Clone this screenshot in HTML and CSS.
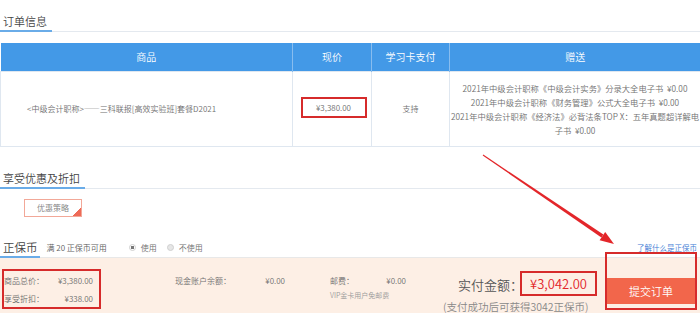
FILE: index.html
```html
<!DOCTYPE html>
<html lang="zh-CN">
<head>
<meta charset="utf-8">
<title>订单信息</title>
<link rel="stylesheet" href="styles.css">
</head>
<body>
<div class="page">
  <div class="title"><span class="tab">订单信息</span></div>
  <table class="order">
    <thead>
      <tr>
        <th class="c1">商品</th>
        <th class="c2">现价</th>
        <th class="c3">学习卡支付</th>
        <th class="c4">赠送</th>
      </tr>
    </thead>
    <tbody>
      <tr>
        <td class="name">&lt;中级会计职称&gt;——三科联报[高效实验班]套餐D2021</td>
        <td><span class="mark price">¥3,380.00</span></td>
        <td>支持</td>
        <td class="gift">
          <div>2021年中级会计职称《中级会计实务》分录大全电子书&nbsp; ¥0.00</div>
          <div>2021年中级会计职称《财务管理》公式大全电子书&nbsp; ¥0.00</div>
          <div>2021年中级会计职称《经济法》必背法条TOP X：五年真题超详解电</div>
          <div>子书&nbsp; ¥0.00</div>
        </td>
      </tr>
    </tbody>
  </table>

  <div class="title title2"><span class="tab">享受优惠及折扣</span></div>
  <div class="coupon">优惠策略</div>

  <div class="coin">
    <span class="tab tab-coin">正保币</span>
    <span class="rule">满 20 正保币可用</span>
    <span class="radios">
      <span class="radio on"></span><span class="radio-label">使用</span>
      <span class="radio"></span><span class="radio-label">不使用</span>
    </span>
    <span class="learn">了解什么是正保币</span>
  </div>

  <div class="bar">
    <div class="mark sum">
      <div class="sum-row"><span>商品总价：</span><span>¥3,380.00</span></div>
      <div class="sum-row"><span>享受折扣：</span><span>¥338.00</span></div>
    </div>
    <div class="cash"><span>现金账户余额：</span><span>¥0.00</span></div>
    <div class="post">
      <div class="post-row"><span>邮费：</span><span>¥0.00</span></div>
      <div class="vip">VIP金卡用户免邮费</div>
    </div>
    <div class="pay">
      <div class="pay-row">
        <span class="pay-label">实付金额：</span>
        <span class="mark pay-total">¥3,042.00</span>
      </div>
      <div class="pay-note">(支付成功后可获得3042正保币)</div>
    </div>
    <div class="submit">
      <div class="submit-btn">提交订单</div>
      <div class="submit-mark"></div>
    </div>
  </div>
</div>
<svg class="arrow" width="700" height="313" viewBox="0 0 700 313" aria-hidden="true">
  <polygon points="482.7,155.4 483.3,154.6 603.4,234.6 601.4,237.6" fill="#e3262a"/>
  <polygon points="614,244 599.6,240.2 605.2,232.0" fill="#e3262a"/>
</svg>
</body>
</html>
```
FILE: styles.css
```css
* { box-sizing: border-box; }
html, body { margin: 0; padding: 0; }
body {
  font-family: "Noto Sans CJK SC", "Noto Sans", sans-serif;
  font-weight: 350;
  color: #707070;
  background: #fff;
  width: 700px;
  height: 313px;
  overflow: hidden;
  position: relative;
}
.page { padding-top: 12px; }

.title {
  display: flex;
  border-bottom: 1px solid #e4e9ef;
}
.title2 { margin-top: 22px; }
.tab {
  font-size: 11px;
  line-height: 18px;
  color: #444;
  font-weight: 350;
  padding: 0 5px 0 3px;
  border-bottom: 2px solid #6aace8;
  margin-bottom: -1px;
}

.order {
  margin-top: 11px;
  width: 700px;
  border-collapse: collapse;
  table-layout: fixed;
}
.c1 { width: 292px; }
.c2 { width: 79px; }
.c3 { width: 78px; }
.c4 { width: 251px; }
.order th {
  background: #4399e7;
  color: #fff;
  font-weight: 350;
  font-size: 10px;
  height: 28px;
  padding: 0;
  border-left: 1px solid #88bdef;
}
.order th:first-child { border-left: 0; }
.order td {
  border: 1px solid #dfe7f0;
  height: 75px;
  text-align: center;
  vertical-align: middle;
  font-size: 8px;
  padding: 0;
  color: #707070;
}
.order td.name { text-align: left; padding-left: 26px; }
.order td.gift { font-size: 8.3px; }
.gift div { line-height: 14px; white-space: nowrap; }

.mark { border: 2px solid #d62b2b; }
.price {
  display: inline-flex;
  align-items: center;
  justify-content: center;
  width: 66px;
  height: 21px;
  margin-left: 3px;
  margin-top: -3px;
}

.coupon {
  display: flex;
  align-items: center;
  justify-content: center;
  margin: 10px 0 0 24px;
  width: 58px;
  height: 18px;
  border: 1px solid #f2a898;
  font-size: 8px;
  color: #808080;
  background:
    linear-gradient(135deg, transparent 50%, #ee6a57 50%) right bottom / 8px 8px no-repeat;
}

.coin {
  display: flex;
  align-items: center;
  margin-top: 21px;
  border-bottom: 1px solid #e8e8e8;
}
.tab-coin { padding-right: 2px; color: #444; font-size: 11.5px; }
.rule { margin-left: 7px; font-size: 8px; color: #606060; }
.radios {
  display: flex;
  align-items: center;
  margin-left: 22px;
  font-size: 8px;
  color: #707070;
}
.radio {
  width: 7px;
  height: 7px;
  border-radius: 50%;
  border: 1px solid #d0d0d0;
  background: #e6e6e6;
  margin-right: 5px;
}
.radio.on { background: radial-gradient(circle, #777 0 1.5px, #fff 2px); }
.radio-label + .radio { margin-left: 10px; }
.learn {
  margin-left: auto;
  margin-right: 3px;
  font-size: 7.5px;
  color: #3b79d4;
  text-decoration: underline;
}

.bar {
  display: flex;
  align-items: flex-start;
  height: 56px;
  background: #fdefe5;
  font-size: 8px;
  color: #707070;
}
.sum {
  margin: 11px 0 0 2px;
  width: 99px;
  height: 40px;
  padding: 2px 6px 0 0;
  display: flex;
  flex-direction: column;
  gap: 2px;
}
.sum-row, .post-row {
  display: flex;
  justify-content: space-between;
  line-height: 16px;
}
.cash {
  margin: 15px 0 0 74px;
  width: 110px;
  display: flex;
  justify-content: space-between;
  line-height: 16px;
}
.post { margin: 15px 0 0 45px; width: 76px; }
.vip { font-size: 7px; line-height: 12px; color: #999; }
.pay { margin: 13px 0 0 37px; width: 154px; }
.pay-row { display: flex; align-items: center; padding-left: 15px; }
.pay-label {
  font-size: 13px;
  color: #555;
  width: 62px;
  white-space: nowrap;
  padding-top: 3px;
}
.pay-total {
  width: 77px;
  height: 25px;
  display: flex;
  align-items: center;
  justify-content: center;
  font-size: 13px;
  color: #e2262a;
}
.pay-note {
  margin-top: 4px;
  font-size: 10.5px;
  line-height: 14px;
  color: #888;
  white-space: nowrap;
}
.submit { position: relative; margin-left: 8px; width: 92px; height: 56px; }
.submit-btn {
  margin: 20px 0 0 1px;
  width: 90px;
  height: 26px;
  background: #f2664b;
  color: #fff;
  font-size: 11px;
  display: flex;
  align-items: center;
  justify-content: center;
}
.submit-mark {
  position: absolute;
  left: 0;
  top: -6px;
  width: 92px;
  height: 58px;
  border: 2px solid #d62b2b;
}

.arrow {
  position: absolute;
  left: 0;
  top: 0;
  pointer-events: none;
}
```
